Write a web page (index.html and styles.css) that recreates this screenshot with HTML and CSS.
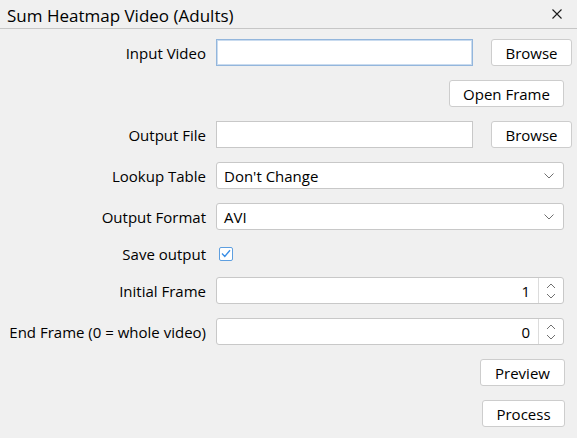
FILE: index.html
```html
<!DOCTYPE html>
<html>
<head>
<meta charset="utf-8">
<link rel="stylesheet" href="styles.css">
</head>
<body>
<div class="window">
  <div class="titlebar">
    <span class="title">Sum Heatmap Video (Adults)</span>
    <svg class="close" width="10" height="10" viewBox="0 0 10 10"><path d="M0.5 0.5 L9.5 9.5 M9.5 0.5 L0.5 9.5" stroke="#1a1a1a" stroke-width="1.1" fill="none"/></svg>
  </div>
  <div class="form">
    <label class="lbl">Input Video</label>
    <div class="cell pair">
      <div class="field path focus"></div>
      <button class="btn browse">Browse</button>
    </div>

    <div class="cell end span"><button class="btn open">Open Frame</button></div>

    <label class="lbl">Output File</label>
    <div class="cell pair">
      <div class="field path"></div>
      <button class="btn browse">Browse</button>
    </div>

    <label class="lbl">Lookup Table</label>
    <div class="cell">
      <div class="field combo"><span>Don't Change</span>
        <svg class="chev" width="10" height="6" viewBox="0 0 10 6"><path d="M0.5 0.5 L5 5 L9.5 0.5" stroke="#707070" stroke-width="1" fill="none"/></svg>
      </div>
    </div>

    <label class="lbl">Output Format</label>
    <div class="cell">
      <div class="field combo"><span>AVI</span>
        <svg class="chev" width="10" height="6" viewBox="0 0 10 6"><path d="M0.5 0.5 L5 5 L9.5 0.5" stroke="#707070" stroke-width="1" fill="none"/></svg>
      </div>
    </div>

    <label class="lbl short">Save output</label>
    <div class="cell short">
      <span class="check"><svg width="10" height="9" viewBox="0 0 10 9"><path d="M1 4.6 L3.8 7.4 L9 1.2" stroke="#3a8ee6" stroke-width="1.4" fill="none"/></svg></span>
    </div>

    <label class="lbl">Initial Frame</label>
    <div class="cell">
      <div class="field spin"><span class="val">1</span>
        <span class="arrows"><svg width="10" height="20" viewBox="0 0 10 20"><path d="M1 7 L5 3 L9 7 M1 13 L5 17 L9 13" stroke="#707070" stroke-width="1" fill="none"/></svg></span>
      </div>
    </div>

    <label class="lbl">End Frame (0 = whole video)</label>
    <div class="cell">
      <div class="field spin"><span class="val">0</span>
        <span class="arrows"><svg width="10" height="20" viewBox="0 0 10 20"><path d="M1 7 L5 3 L9 7 M1 13 L5 17 L9 13" stroke="#707070" stroke-width="1" fill="none"/></svg></span>
      </div>
    </div>

    <div class="cell end span"><button class="btn preview">Preview</button></div>
    <div class="cell end span"><button class="btn process">Process</button></div>
  </div>
</div>
</body>
</html>
```

FILE: styles.css
```css
html, body {
  margin: 0;
  padding: 0;
  background: #f0f0f0;
}
body {
  font-family: "Open Sans", "Noto Sans", sans-serif;
  font-size: 15px;
  color: #000;
  width: 577px;
  height: 438px;
  overflow: hidden;
}
.titlebar {
  height: 28px;
  border-bottom: 1px solid #c6c6c6;
  display: flex;
  align-items: center;
  justify-content: space-between;
  padding: 0 15px 0 7px;
}
.title {
  font-size: 17px;
  color: #000;
  position: relative;
  top: 1px;
}
.close {
  display: block;
}
.form {
  display: grid;
  grid-template-columns: 199px 356px;
  grid-template-rows: repeat(5, 27px) 19px repeat(4, 27px);
  column-gap: 10px;
  row-gap: 14px;
  padding: 10px 0 0 7px;
}
.lbl {
  display: flex;
  align-items: center;
  justify-content: flex-end;
  white-space: nowrap;
  height: 27px;
}
.form > .short {
  height: 19px;
}
.cell {
  display: flex;
  align-items: center;
  height: 27px;
}
.span {
  grid-column: 1 / 3;
}
.end {
  justify-content: flex-end;
}
.pair {
  gap: 18px;
}
.field {
  box-sizing: border-box;
  height: 27px;
  background: #fff;
  border: 1px solid #c8c8c8;
}
.path {
  width: 257px;
}
.focus {
  border-color: #93b6dc;
  box-shadow: inset 0 0 0 1px #c9dbef;
}
.btn {
  box-sizing: border-box;
  height: 27px;
  background: #fff;
  border: 1px solid #cdcdcd;
  border-radius: 3px;
  font-family: inherit;
  font-size: 15px;
  color: #000;
  padding: 0;
}
.browse {
  width: 81px;
}
.open {
  width: 115px;
  margin-right: 8px;
}
.preview {
  width: 85px;
  margin-right: 7px;
}
.process {
  width: 83px;
  margin-right: 7px;
}
.combo, .spin {
  width: 348px;
  border-radius: 3px;
  display: flex;
  align-items: center;
}
.combo span {
  flex: 1;
  padding-left: 7px;
}
.chev {
  margin-right: 9px;
}
.spin .val {
  flex: 1;
  text-align: right;
  padding-right: 8px;
}
.arrows {
  width: 24px;
  height: 25px;
  border-left: 1px solid #dcdcdc;
  display: flex;
  align-items: center;
  justify-content: center;
}
.check {
  box-sizing: border-box;
  width: 14px;
  height: 14px;
  margin-left: 3px;
  border: 1px solid #5e9fe0;
  border-radius: 2px;
  background: #fff;
  display: flex;
  align-items: center;
  justify-content: center;
}
```
